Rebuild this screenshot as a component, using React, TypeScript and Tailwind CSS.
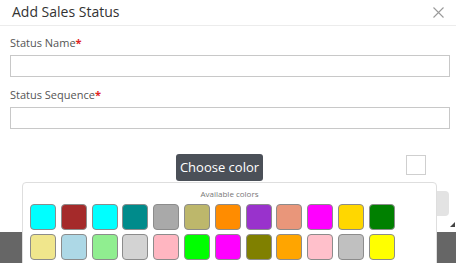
const ROW_ONE = [
  '#00ffff', '#a52a2a', '#00ffff', '#008b8b', '#a9a9a9', '#bdb76b',
  '#ff8c00', '#9932cc', '#e9967a', '#ff00ff', '#ffd700', '#008000',
];
const ROW_TWO = [
  '#f0e68c', '#add8e6', '#90ee90', '#d3d3d3', '#ffb6c1', '#00ff00',
  '#ff00ff', '#808000', '#ffa500', '#ffc0cb', '#c0c0c0', '#ffff00',
];

function Field({ label }: { label: string }) {
  return (
    <div className="flex flex-col">
      <label className="text-[11px] leading-[14px] text-[#555] mb-[5px]">
        {label}
        <span className="text-[#e02424] font-bold">*</span>
      </label>
      <input className="h-[22px] w-full border border-[#c8c8c8] bg-white outline-none" />
    </div>
  );
}

function Swatch({ color }: { color: string }) {
  return (
    <button
      className="w-[26px] h-[26px] rounded-[4px] border-[1.5px] border-[#8c8c8c]"
      style={{ backgroundColor: color }}
    />
  );
}

export default function App() {
  return (
    <div
      className="relative w-[456px] h-[263px] overflow-hidden bg-[#666666]"
      style={{ fontFamily: '"Open Sans", "Liberation Sans", sans-serif' }}
    >
      <div className="relative h-[232px] bg-white">
        <div className="flex items-center justify-between h-[26px] pl-[12px] pr-[12px] border-b border-[#ececec]">
          <h2 className="text-[14px] leading-[18px] text-[#333] -mt-[2px]">Add Sales Status</h2>
          <svg width="11" height="11" viewBox="0 0 11 11" className="-mt-[1px]">
            <path d="M0.5 0.5L10.5 10.5M10.5 0.5L0.5 10.5" stroke="#9a9a9a" strokeWidth="1.1" />
          </svg>
        </div>

        <div className="flex flex-col gap-[11px] pl-[10px] pt-[10px] pr-[6px]">
          <Field label="Status Name" />
          <Field label="Status Sequence" />
        </div>

        <div className="flex justify-end pr-[30px] mt-[26px]">
          <div className="w-[20px] h-[20px] border border-[#cfcfcf] bg-white" />
        </div>

        <div className="flex justify-end pr-[7px] mt-[16px]">
          <div className="w-[70px] h-[25px] rounded-[4px] bg-[#e3e3e3]" />
        </div>

        <svg width="5" height="5" viewBox="0 0 5 5" className="absolute right-[1px] top-[222px]">
          <path d="M5 0L5 5L0 5Z" fill="#444" />
        </svg>
      </div>

      <div className="absolute left-[176px] top-[154px] h-[27px] w-[87px] rounded-[3px] bg-[#4b5058] flex items-center justify-center">
        <span className="text-[13px] text-white">Choose color</span>
      </div>

      <div className="absolute left-[22px] top-[182px] w-[415px] h-[100px] bg-white border border-[#dedede] rounded-t-[4px] pl-[7px] pt-[5px]">
        <p className="text-[8px] leading-[11px] text-[#777] text-center pr-[7px]">Available colors</p>
        <div className="flex flex-col gap-[4px] mt-[5px]">
          <div className="flex gap-[4.8px]">
            {ROW_ONE.map((c, i) => (
              <Swatch key={i} color={c} />
            ))}
          </div>
          <div className="flex gap-[4.8px]">
            {ROW_TWO.map((c, i) => (
              <Swatch key={i} color={c} />
            ))}
          </div>
        </div>
      </div>
    </div>
  );
}
